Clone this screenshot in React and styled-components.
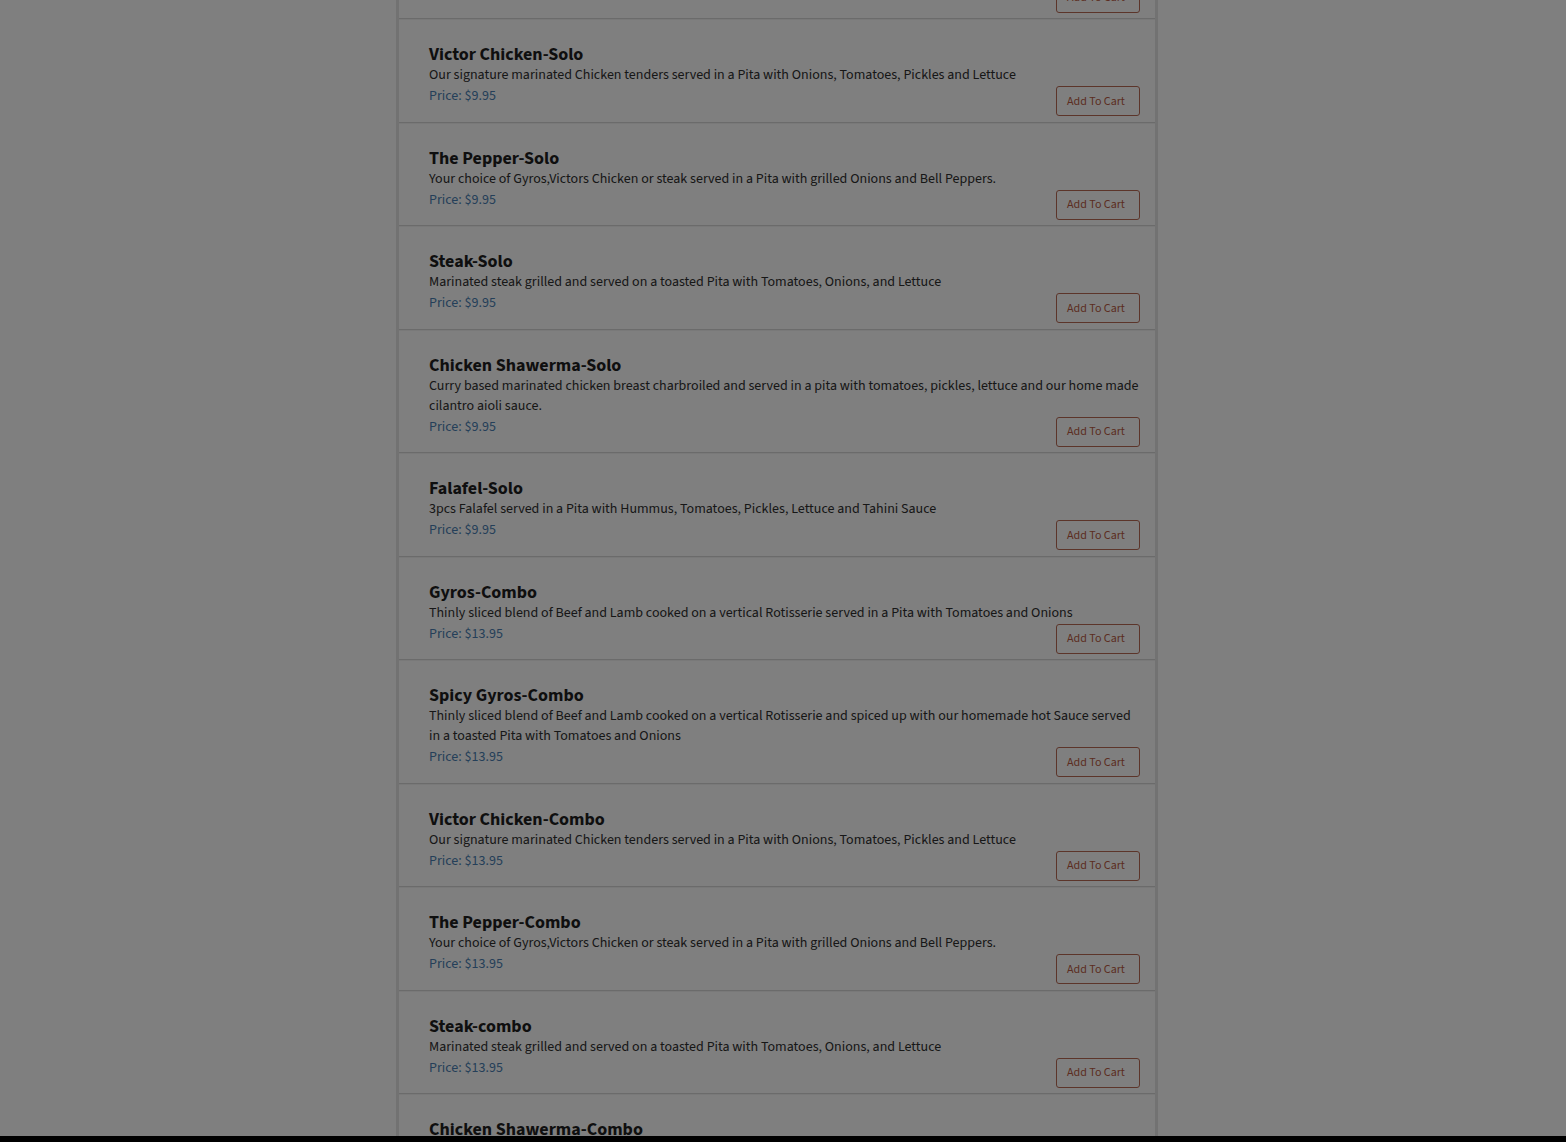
import React from 'react';
import styled, { createGlobalStyle } from 'styled-components';

const GlobalStyle = createGlobalStyle`
  body {
    margin: 0;
    background: #fff;
    font-family: "Source Sans 3", "Source Sans Pro", Lato, sans-serif;
    overflow: hidden;
  }
`;

const Page = styled.div`
  display: flex;
  justify-content: center;
  padding-right: 12px;
`;

const Menu = styled.div`
  width: 756px;
  background: #fff;
  border-left: 3px solid #e4e4e4;
  border-right: 3px solid #e4e4e4;
`;

const List = styled.div`
  margin-top: -104.5px;
`;

const Item = styled.div`
  padding: 25px 15px 5.5px 30px;
  border-bottom: 1px solid #d6d6d6;
  box-shadow: inset 0 1px 0 #f3f3f3;
`;

const Name = styled.h3`
  margin: 0;
  font-size: 18px;
  line-height: 22px;
  font-weight: 700;
  color: #1e1e1e;
`;

const Desc = styled.p`
  margin: -1px 0 1px;
  font-size: 14px;
  line-height: 20px;
  color: #2e2e2e;
`;

const Footer = styled.div`
  display: flex;
  justify-content: space-between;
  align-items: flex-start;
`;

const Price = styled.span`
  font-size: 14px;
  line-height: 20px;
  color: #4a7fb2;
`;

const CartButton = styled.button`
  height: 30px;
  padding: 0 14px 0 10px;
  width: 84px;
  border: 1px solid #b86a55;
  border-radius: 3px;
  background: #fff;
  color: #b85a42;
  font-family: inherit;
  font-size: 12px;
  text-align: left;
  cursor: pointer;
`;

const Backdrop = styled.div`
  position: fixed;
  inset: 0;
  background: rgba(0, 0, 0, 0.5);
`;

const BottomBar = styled.div`
  position: fixed;
  left: 0;
  right: 0;
  bottom: 0;
  height: 6px;
  background: #000;
`;

const spicy =
  'Thinly sliced blend of Beef and Lamb cooked on a vertical Rotisserie and spiced up with our homemade hot Sauce served in a toasted Pita with Tomatoes and Onions';
const victor =
  'Our signature marinated Chicken tenders served in a Pita with Onions, Tomatoes, Pickles and Lettuce';
const pepper =
  'Your choice of Gyros,Victors Chicken or steak served in a Pita with grilled Onions and Bell Peppers.';
const steak = 'Marinated steak grilled and served on a toasted Pita with Tomatoes, Onions, and Lettuce';
const shawerma =
  'Curry based marinated chicken breast charbroiled and served in a pita with tomatoes, pickles, lettuce and our home made cilantro aioli sauce.';

const items = [
  { name: 'Spicy Gyros-Solo', desc: spicy, price: '9.95' },
  { name: 'Victor Chicken-Solo', desc: victor, price: '9.95' },
  { name: 'The Pepper-Solo', desc: pepper, price: '9.95' },
  { name: 'Steak-Solo', desc: steak, price: '9.95' },
  { name: 'Chicken Shawerma-Solo', desc: shawerma, price: '9.95' },
  {
    name: 'Falafel-Solo',
    desc: '3pcs Falafel served in a Pita with Hummus, Tomatoes, Pickles, Lettuce and Tahini Sauce',
    price: '9.95',
  },
  {
    name: 'Gyros-Combo',
    desc: 'Thinly sliced blend of Beef and Lamb cooked on a vertical Rotisserie served in a Pita with Tomatoes and Onions',
    price: '13.95',
  },
  { name: 'Spicy Gyros-Combo', desc: spicy, price: '13.95' },
  { name: 'Victor Chicken-Combo', desc: victor, price: '13.95' },
  { name: 'The Pepper-Combo', desc: pepper, price: '13.95' },
  { name: 'Steak-combo', desc: steak, price: '13.95' },
  { name: 'Chicken Shawerma-Combo', desc: shawerma, price: '13.95' },
];

const App = () => {
  return (
    <>
      <GlobalStyle />
      <Page>
        <Menu>
          <List>
            {items.map((item) => (
              <Item key={item.name}>
                <Name>{item.name}</Name>
                <Desc>{item.desc}</Desc>
                <Footer>
                  <Price>Price: ${item.price}</Price>
                  <CartButton>Add To Cart</CartButton>
                </Footer>
              </Item>
            ))}
          </List>
        </Menu>
      </Page>
      <Backdrop />
      <BottomBar />
    </>
  );
};

export default App;
